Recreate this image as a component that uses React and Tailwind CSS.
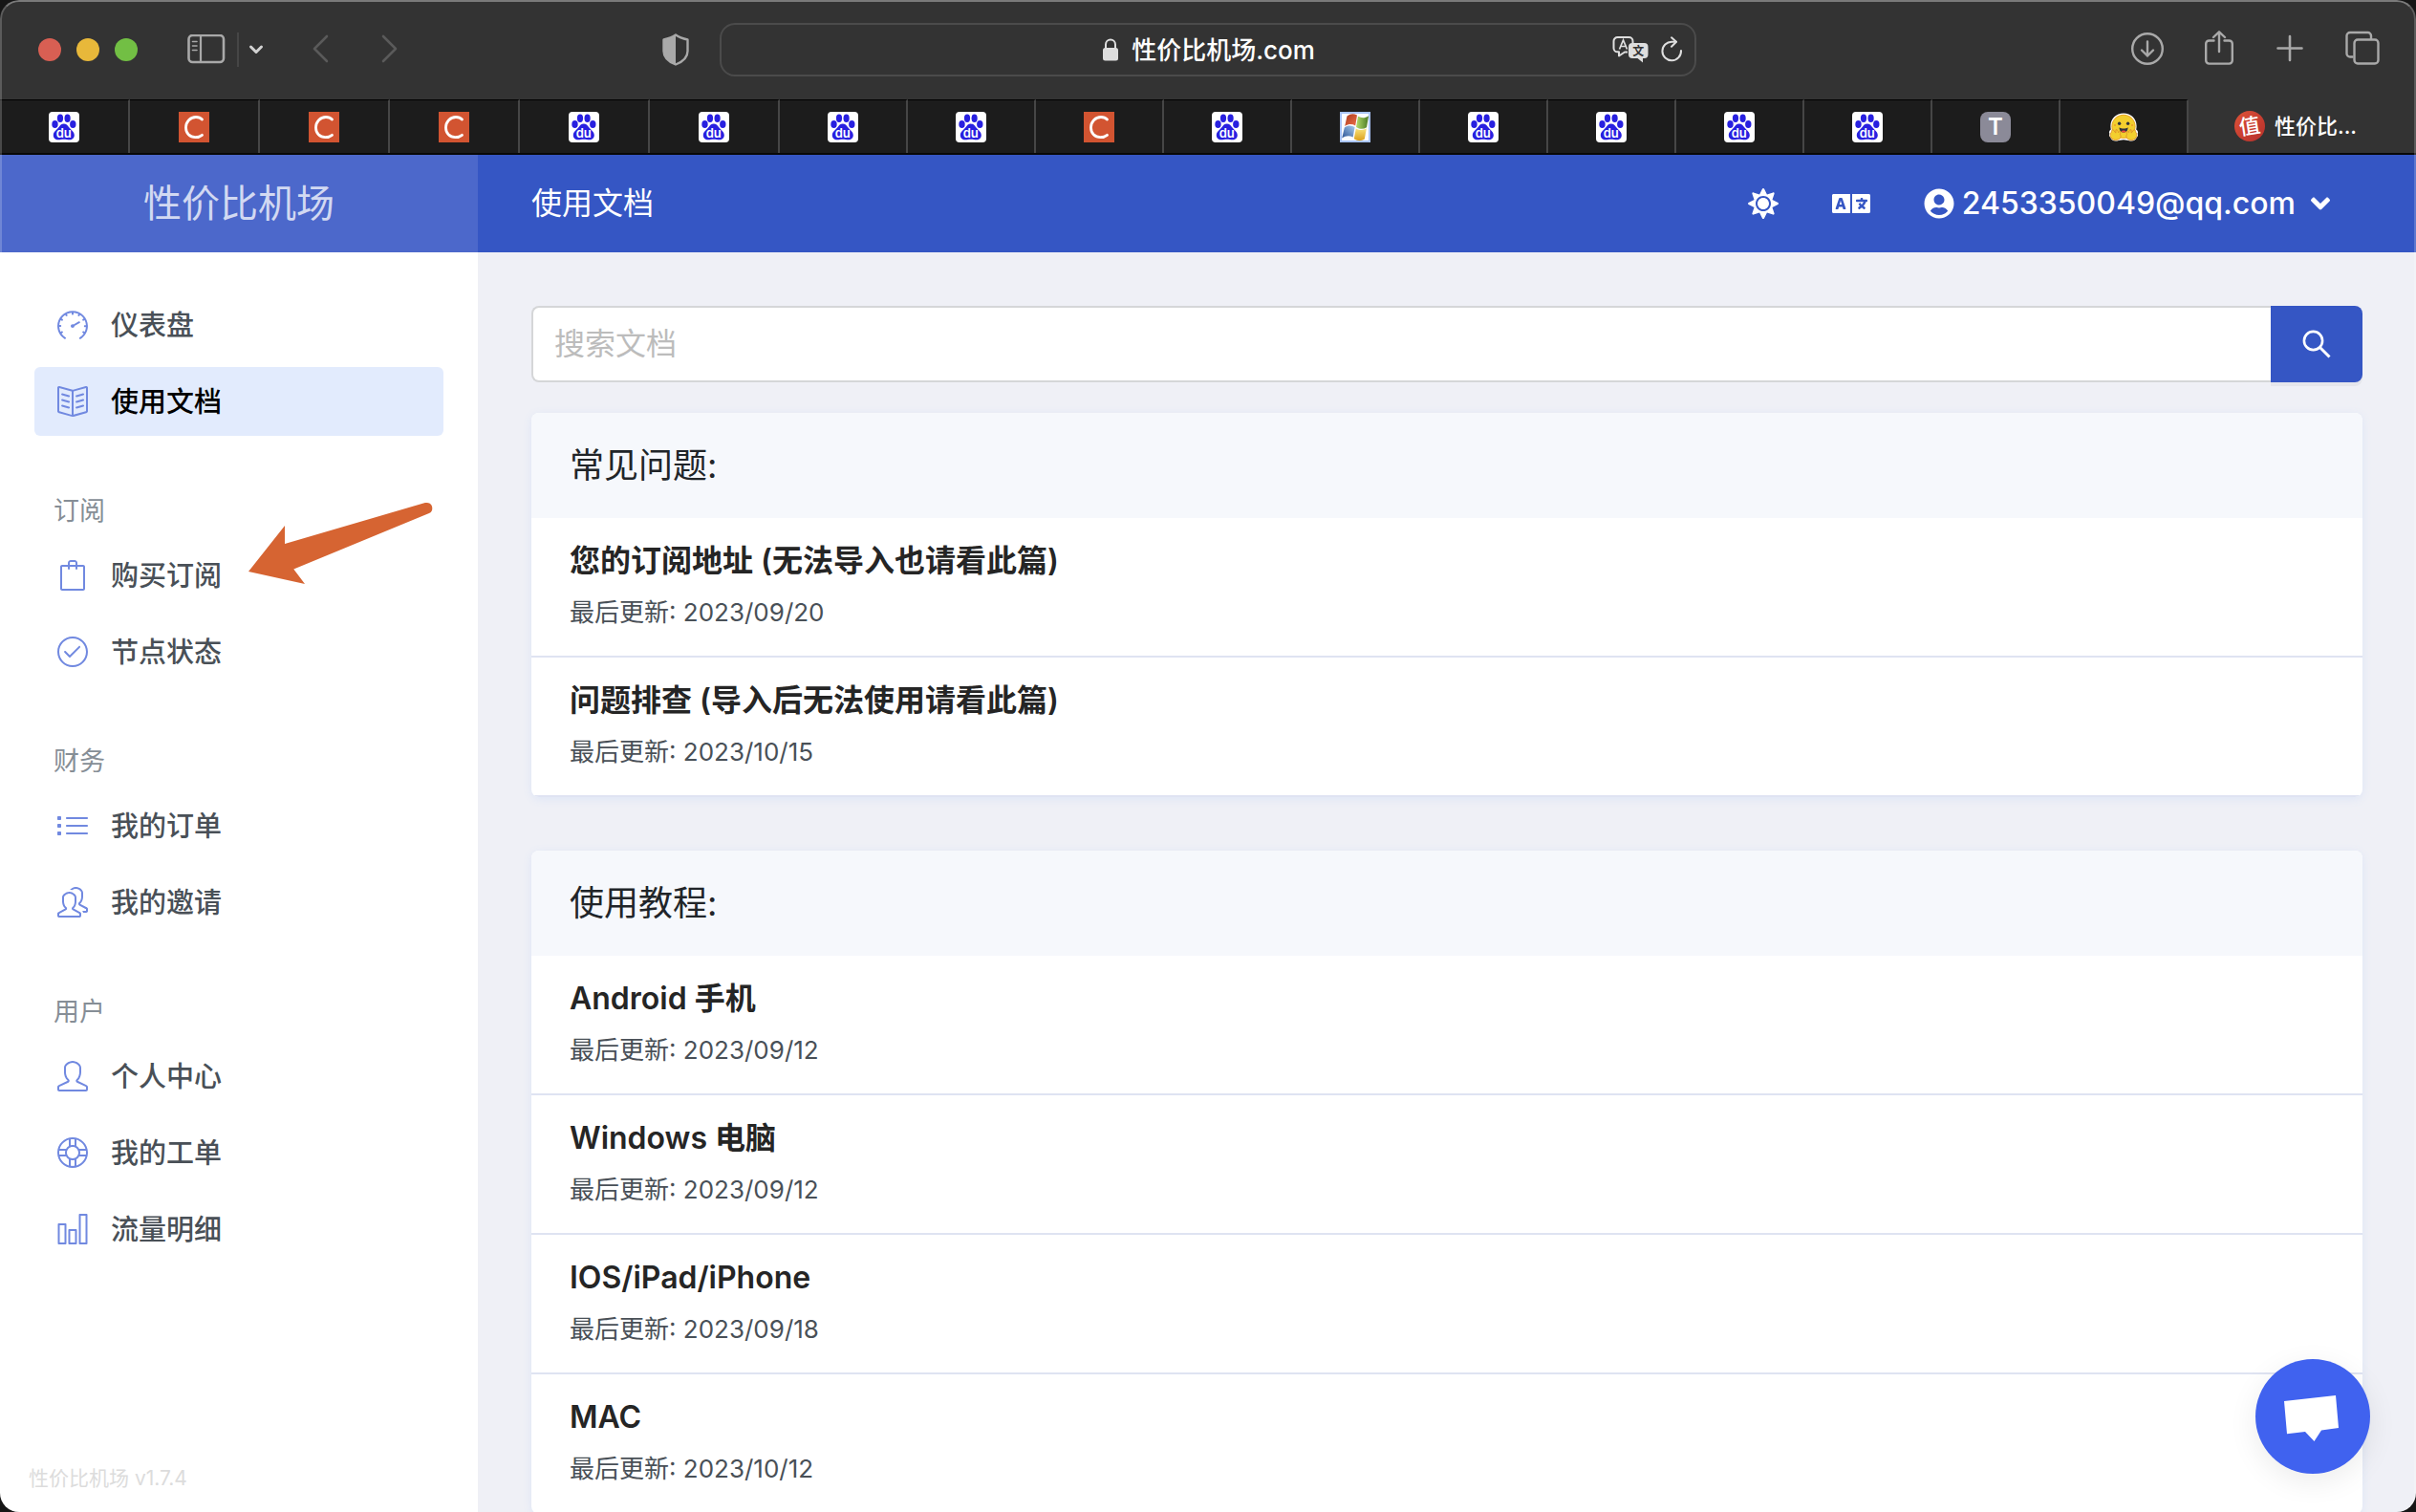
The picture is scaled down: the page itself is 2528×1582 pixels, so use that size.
import React from "react";
import {
  SlSpeedometer,
  SlBookOpen,
  SlBag,
  SlCheck,
  SlList,
  SlPeople,
  SlUser,
  SlSupport,
  SlChart,
} from "react-icons/sl";
import { FaSun, FaLanguage, FaUserCircle, FaAngleDown } from "react-icons/fa";

/* ---------- favicons ---------- */

function BaiduIcon() {
  return (
    <svg viewBox="0 0 32 32" className="size-8" aria-hidden="true">
      <rect width="32" height="32" rx="4" fill="#fff" />
      <g fill="#2820e0">
        <ellipse cx="6.5" cy="13" rx="3.2" ry="4.1" />
        <ellipse cx="12" cy="6.7" rx="3.1" ry="4.2" />
        <ellipse cx="19.6" cy="6.7" rx="3.1" ry="4.2" />
        <ellipse cx="25.3" cy="13" rx="3.2" ry="4.1" />
        <path d="M15.8 12.6c2.600 0 4 1.700 5.200 3.500 1.600 2.300 5.800 4.600 5.800 8.300 0 2.900-2.200 4.900-5.200 4.900-2 0-3.500-.5-5.800-.5s-3.800.5-5.800.5c-3 0-5.200-2-5.200-4.900 0-3.700 4.200-6 5.800-8.300 1.200-1.800 2.600-3.500 5.200-3.500z" />
      </g>
      <text x="15.800" y="26.800" textAnchor="middle" fontFamily="Inter, sans-serif" fontSize="13" fontWeight="600" fill="#fff">
        du
      </text>
    </svg>
  );
}

function CsdnIcon() {
  return (
    <svg viewBox="0 0 32 32" className="size-8" aria-hidden="true">
      <rect width="32" height="32" fill="#d25431" />
      <path d="M24.500 8C22.800 6.200 20.300 5.500 18 5.500c-6 0-10.500 4.800-10.500 11 0 6 4 10.200 10 10.200 2.600 0 5-.8 7-2.400" fill="none" stroke="#fff" strokeWidth="2.800" strokeLinecap="round" />
    </svg>
  );
}

function FlagIcon() {
  return (
    <svg viewBox="0 0 32 32" className="size-8" aria-hidden="true">
      <defs>
        <linearGradient id="flagRed" x1="0" y1="0" x2="1" y2="1">
          <stop offset="0" stopColor="#a83a1c" />
          <stop offset="1" stopColor="#f0704a" />
        </linearGradient>
        <linearGradient id="flagGreen" x1="0" y1="0" x2="1" y2="0">
          <stop offset="0" stopColor="#b4dc6a" />
          <stop offset="1" stopColor="#4a7a26" />
        </linearGradient>
        <linearGradient id="flagBlue" x1="0" y1="1" x2="1" y2="0">
          <stop offset="0" stopColor="#2c5496" />
          <stop offset="1" stopColor="#a8ccee" />
        </linearGradient>
        <linearGradient id="flagYellow" x1="0" y1="0" x2="0" y2="1">
          <stop offset="0" stopColor="#f8e27a" />
          <stop offset="1" stopColor="#dca01c" />
        </linearGradient>
      </defs>
      <rect width="32" height="32" fill="#a9c4f8" />
      <rect x="2" y="2" width="28" height="28" fill="#fbfcff" />
      <path d="M7.500 4.500c4-3 7-2.800 10.500-1l-1.800 11c-3.500-2-7-2-11 .5z" fill="url(#flagRed)" />
      <path d="M19 4.800c4 2 7 2 11-.6l-2 12c-3.600 2.200-7.200 2-11-.3z" fill="url(#flagGreen)" />
      <path d="M4.800 16.400c4-2.500 7.200-2.400 10.800-.4l-1.900 10.600c-3.600-2-7.400-1.900-11.500.8z" fill="url(#flagBlue)" />
      <path d="M16.800 17.400c3.800 2.200 7.400 2.200 11 .2l-2 11c-3.800 2.200-7.200 2-11-.4z" fill="url(#flagYellow)" />
    </svg>
  );
}

function LetterTIcon() {
  return (
    <span className="flex size-8 items-center justify-center rounded-lg bg-[#8b8a98] text-2xl font-semibold text-white">
      T
    </span>
  );
}

function HugIcon() {
  return (
    <svg viewBox="0 0 32 32" className="size-8" aria-hidden="true">
      <path d="M16 1.600c7.800 0 13.600 5.800 13.600 13.200 0 1.400-.1 2.400-.4 3.600 2 1.300 2.200 3.300 1.500 4.600.8 1.600.2 3-1 3.800-.4 2.600-3.600 4.200-7 3.600-2.200-.4-4-1.200-6.700-1.200s-4.500.8-6.700 1.200c-3.400.6-6.600-1-7-3.600-1.200-.8-1.800-2.200-1-3.800-.7-1.300-.5-3.300 1.500-4.600-.3-1.200-.4-2.200-.4-3.600C2.400 7.400 8.200 1.600 16 1.600z" fill="#fff" />
      <circle cx="16" cy="15.300" r="12.600" fill="#e9a92a" />
      <circle cx="16" cy="15.300" r="11.600" fill="#f3cf2e" />
      <circle cx="11.600" cy="12.200" r="1.700" fill="#30343c" />
      <circle cx="20.600" cy="12.200" r="1.700" fill="#30343c" />
      <circle cx="7" cy="14" r="1" fill="#ee9a2a" />
      <circle cx="25" cy="14" r="1" fill="#ee9a2a" />
      <path d="M11.600 16.300c1.300 1 2.800 1.300 4.500 1.300s3.200-.3 4.400-1.300c.3 3.300-1.900 5.300-4.400 5.300s-4.800-2-4.500-5.300z" fill="#30343c" />
      <path d="M13.600 20.200c.8-.9 4.200-.9 5 0-.7 1-1.500 1.400-2.500 1.400s-1.900-.4-2.500-1.400z" fill="#ee4a3e" />
      <g fill="#f3cf2e" stroke="#e2952a" strokeWidth="1" strokeLinejoin="round">
        <path d="M5 18.500l2.800 3.600.2-3.400c1.800-.2 2.300 1.300 2.500 3l1.300-1.300c1.400.6 1 2 .6 3.200 1.600 2.200.3 4.800-2.200 5.500-3.300.8-6.500.2-7.200-2.400-1.200-.8-1.200-1.900-.4-2.700-.8-1.100-.4-2.200.8-2.400-.2-1.500.6-2.900 1.600-3.100z" />
        <path d="M27 18.500l-2.800 3.600-.2-3.400c-1.800-.2-2.300 1.300-2.500 3l-1.300-1.300c-1.400.6-1 2-.6 3.200-1.600 2.200-.3 4.800 2.200 5.500 3.300.8 6.500.2 7.200-2.400 1.200-.8 1.200-1.900.4-2.700.8-1.100.4-2.200-.8-2.400.2-1.500-.6-2.900-1.600-3.100z" />
      </g>
    </svg>
  );
}

function ZhiIcon() {
  return (
    <svg viewBox="0 0 32 32" className="size-8 shrink-0 overflow-visible" aria-hidden="true">
      <defs>
        <linearGradient id="zhiRed" x1="0" y1="0" x2="1" y2="1">
          <stop offset="0" stopColor="#dd5238" />
          <stop offset="1" stopColor="#b62f2b" />
        </linearGradient>
      </defs>
      <circle cx="16" cy="16" r="16" fill="url(#zhiRed)" />
      <text x="16" y="24" textAnchor="middle" transform="rotate(-9 16 16)" fontFamily="'Noto Sans CJK SC', sans-serif" fontSize="22" fontWeight="500" fill="#fff">
        值
      </text>
    </svg>
  );
}

/* ---------- browser toolbar ---------- */

function BrowserToolbar() {
  return (
    <div className="grid h-[104px] grid-cols-[753fr_1022fr_753fr] items-center bg-[#333333]">
      <div className="flex items-center pr-8 pl-10">
        <div className="flex gap-4">
          <button aria-label="关闭" className="size-6 rounded-full bg-[#d85f53]" />
          <button aria-label="最小化" className="size-6 rounded-full bg-[#e8b83a]" />
          <button aria-label="全屏" className="size-6 rounded-full bg-[#72bf44]" />
        </div>
        <button aria-label="边栏" className="ml-[52px]">
          <svg viewBox="0 0 40 32" className="h-8 w-10" fill="none" stroke="#a9a9a9" strokeLinecap="round" aria-hidden="true">
            <rect x="1.500" y="1" width="36.500" height="28" rx="4" strokeWidth="2.600" />
            <path d="M14 1v28" strokeWidth="2.200" />
            <path d="M5.500 7.500h4.500M5.500 12h4.500M5.500 16.500h4.500" strokeWidth="1.600" />
          </svg>
        </button>
        <span className="ml-3 h-9 w-0.5 bg-[#464646]" />
        <button aria-label="标签页组" className="ml-2">
          <svg viewBox="0 0 20 20" className="size-5" fill="none" stroke="#d2d2d2" strokeWidth="3" strokeLinecap="round" strokeLinejoin="round" aria-hidden="true">
            <path d="M4.500 7l5.500 5.500L15.500 7" />
          </svg>
        </button>
        <button aria-label="后退" className="ml-12">
          <svg viewBox="0 0 20 32" className="h-8 w-5" fill="none" stroke="#5a5a5a" strokeWidth="2.600" strokeLinecap="round" strokeLinejoin="round" aria-hidden="true">
            <path d="M16 2L3 15l13 13" />
          </svg>
        </button>
        <button aria-label="前进" className="ml-[52px]">
          <svg viewBox="0 0 20 32" className="h-8 w-5" fill="none" stroke="#5a5a5a" strokeWidth="2.600" strokeLinecap="round" strokeLinejoin="round" aria-hidden="true">
            <path d="M3 2l13 13L3 28" />
          </svg>
        </button>
        <button aria-label="隐私报告" className="ml-auto">
          <svg viewBox="0 0 28 34" className="h-[34px] w-7" aria-hidden="true">
            <path d="M14 1.500C10.500 4 6 5.500 1.500 6.500v12c0 7 6 11.500 12.500 14 6.500-2.500 12.500-7 12.500-14v-12C22 5.500 17.500 4 14 1.500z" fill="none" stroke="#a9a9a9" strokeWidth="2.400" strokeLinejoin="round" />
            <path d="M14 1.500C10.500 4 6 5.500 1.500 6.500v12c0 7 6 11.500 12.500 14z" fill="#a9a9a9" />
          </svg>
        </button>
      </div>

      <div className="flex h-14 items-center rounded-2xl border-2 border-[#4b4b4b] px-3">
        <div className="flex-1" />
        <a href="#" className="flex items-center gap-3 text-[26px] font-medium text-white">
          <svg viewBox="0 0 20 26" className="h-[26px] w-5" aria-hidden="true">
            <rect x="2" y="11" width="16" height="13.500" rx="2.500" fill="#dedede" />
            <path d="M5 12V7.500a5 5 0 0 1 10 0V12" fill="none" stroke="#dedede" strokeWidth="2" />
          </svg>
          性价比机场.com
        </a>
        <div className="flex flex-1 items-center justify-end gap-3">
          <button aria-label="翻译">
            <svg viewBox="0 0 38 28" className="h-7 w-[38px]" aria-hidden="true">
              <path d="M16 16.500h-3L7 20.500v-4.200H5.500A4 4 0 0 1 1.500 12.500V5a4 4 0 0 1 4-4h12a4 4 0 0 1 4 4v2" fill="none" stroke="#dedede" strokeWidth="2" strokeLinejoin="round" />
              <path d="M7.500 13.500l4-9.500 4 9.500M9 10.500h5" fill="none" stroke="#dedede" strokeWidth="1.700" />
              <path d="M21 7h12.500a4 4 0 0 1 4 4v8a4 4 0 0 1-4 4H32v4.500L26.500 23H21a4 4 0 0 1-4-4v-8a4 4 0 0 1 4-4z" fill="#dedede" />
              <text x="27.200" y="19.500" textAnchor="middle" fontFamily="'Noto Sans CJK SC', sans-serif" fontSize="12" fontWeight="700" fill="#333">
                文
              </text>
            </svg>
          </button>
          <button aria-label="重新载入">
            <svg viewBox="0 0 24 28" className="h-7 w-6" fill="none" stroke="#dedede" strokeWidth="2" strokeLinecap="round" strokeLinejoin="round" aria-hidden="true">
              <path d="M22 15a9.800 9.800 0 1 1-9.600-9.300h4.300" />
              <path d="M12 1.300l5 4.500-5 5" />
            </svg>
          </button>
        </div>
      </div>

      <div className="flex items-center justify-end gap-[42px] pr-[38px]">
        <button aria-label="下载">
          <svg viewBox="0 0 36 40" className="h-10 w-9" fill="none" stroke="#a9a9a9" strokeWidth="2.400" strokeLinecap="round" strokeLinejoin="round" aria-hidden="true">
            <circle cx="19" cy="19" r="15.800" />
            <path d="M19 11.500v15M13 20.500l6 6 6-6" />
          </svg>
        </button>
        <button aria-label="共享">
          <svg viewBox="0 0 32 40" className="h-10 w-8" fill="none" stroke="#a9a9a9" strokeWidth="2.400" strokeLinecap="round" strokeLinejoin="round" aria-hidden="true">
            <path d="M10.500 10.500H5.500a3.300 3.300 0 0 0-3.300 3.300v17.500a3.300 3.300 0 0 0 3.300 3.300h21a3.300 3.300 0 0 0 3.300-3.300V13.800a3.300 3.300 0 0 0-3.300-3.300h-5" />
            <path d="M16 22V1.500M10 7l6-5.700L22 7" />
          </svg>
        </button>
        <button aria-label="新标签页">
          <svg viewBox="0 0 32 40" className="h-10 w-8" fill="none" stroke="#a9a9a9" strokeWidth="2.600" strokeLinecap="round" aria-hidden="true">
            <path d="M16 6v25M3.500 18.500h25" />
          </svg>
        </button>
        <button aria-label="标签页概览">
          <svg viewBox="0 0 36 40" className="h-10 w-9" fill="none" stroke="#a9a9a9" strokeWidth="2.400" strokeLinejoin="round" aria-hidden="true">
            <path d="M8.500 27.500H5A3.500 3.500 0 0 1 1.500 24V5.500A3.500 3.500 0 0 1 5 2h18.500A3.500 3.500 0 0 1 27 5.500V9.500" />
            <rect x="9.500" y="9.500" width="25" height="25" rx="3.500" />
          </svg>
        </button>
      </div>
    </div>
  );
}

/* ---------- tab strip ---------- */

const TABS = [
  BaiduIcon, CsdnIcon, CsdnIcon, CsdnIcon, BaiduIcon, BaiduIcon, BaiduIcon, BaiduIcon, CsdnIcon,
  BaiduIcon, FlagIcon, BaiduIcon, BaiduIcon, BaiduIcon, BaiduIcon, LetterTIcon, HugIcon,
];

function TabStrip() {
  return (
    <div className="flex h-[58px] border-b-2 border-[#080808]">
      {TABS.map((Icon, i) => (
        <button
          key={i}
          aria-label={`标签页 ${i + 1}`}
          className={
            "flex items-center justify-center border-t border-r-2 border-t-black border-r-[#464646] bg-[#1c1c1c] " +
            (i < 6 ? "w-[136px]" : "flex-1")
          }
        >
          <Icon />
        </button>
      ))}
      <button className="flex w-[238px] items-center gap-2.5 bg-[#333333] pl-12 text-[22px] font-medium text-white">
        <ZhiIcon />
        <span>性价比...</span>
      </button>
    </div>
  );
}

/* ---------- sidebar ---------- */

const NAV = [
  {
    items: [
      { label: "仪表盘", Icon: SlSpeedometer },
      { label: "使用文档", Icon: SlBookOpen, active: true },
    ],
  },
  {
    title: "订阅",
    items: [
      { label: "购买订阅", Icon: SlBag, pointed: true },
      { label: "节点状态", Icon: SlCheck },
    ],
  },
  {
    title: "财务",
    items: [
      { label: "我的订单", Icon: SlList },
      { label: "我的邀请", Icon: SlPeople },
    ],
  },
  {
    title: "用户",
    items: [
      { label: "个人中心", Icon: SlUser },
      { label: "我的工单", Icon: SlSupport },
      { label: "流量明细", Icon: SlChart },
    ],
  },
];

function PointerArrow() {
  return (
    <svg viewBox="0 0 194 86" className="pointer-events-none absolute -top-10 left-56 h-[86px] w-[194px]" aria-hidden="true">
      <path d="M0 72L38 24v19L184 .3c5-1.300 8.500 1.500 8.300 5.700 0 2.500-1 4-3.300 5L47.300 69.400 59 85z" fill="#d66432" />
    </svg>
  );
}

function Sidebar() {
  return (
    <aside className="flex w-[500px] shrink-0 flex-col bg-white pt-10">
      <nav>
        {NAV.map((group, i) => (
          <section key={i}>
            {group.title && (
              <h2 className="mt-14 mb-2 pl-14 text-[27px] leading-[46px] text-[#868e96]">{group.title}</h2>
            )}
            <ul className="flex flex-col gap-2 px-9">
              {group.items.map(({ label, Icon, active, pointed }) => (
                <li key={label} className="relative">
                  <a
                    href="#"
                    className={
                      "flex h-[72px] items-center gap-6 rounded-md px-6 text-[29px] font-medium " +
                      (active ? "bg-[#e2ebfd] text-black" : "text-[#495057]")
                    }
                  >
                    <Icon className="size-8 text-[#7189e0]" />
                    <span className="pt-0.5">{label}</span>
                  </a>
                  {pointed && <PointerArrow />}
                </li>
              ))}
            </ul>
          </section>
        ))}
      </nav>
      <p className="mt-auto pb-5 pl-[30px] text-[21px] leading-[30px] text-[#dcdcdc]">性价比机场 v1.7.4</p>
    </aside>
  );
}

/* ---------- documents ---------- */

const GROUPS = [
  {
    title: "常见问题:",
    docs: [
      ["您的订阅地址 (无法导入也请看此篇)", "2023/09/20"],
      ["问题排查 (导入后无法使用请看此篇)", "2023/10/15"],
    ],
  },
  {
    title: "使用教程:",
    docs: [
      ["Android 手机", "2023/09/12"],
      ["Windows 电脑", "2023/09/12"],
      ["IOS/iPad/iPhone", "2023/09/18"],
      ["MAC", "2023/10/12"],
    ],
  },
];

function DocGroup({ title, docs }) {
  return (
    <section className="shrink-0 overflow-hidden rounded-lg bg-white shadow-[0_2px_10px_#dde5f6]">
      <h2 className="flex h-[110px] items-center bg-[#f6f8fc] px-10 text-[36px] text-[#212529]">{title}</h2>
      <ul>
        {docs.map(([name, date]) => (
          <li key={name} className="border-b-2 border-[#dfe3f2]">
            <a href="#" className="flex h-36 flex-col justify-center px-10">
              <span className="text-[32px] leading-[54px] font-semibold text-[#252525]">{name}</span>
              <span className="text-[26px] leading-[54px] text-[#495057]">最后更新: {date}</span>
            </a>
          </li>
        ))}
      </ul>
    </section>
  );
}

function Main() {
  return (
    <main className="flex min-w-0 flex-1 flex-col overflow-hidden bg-[#eff0f6] p-14">
      <form className="mb-8 flex h-20 shrink-0" role="search" onSubmit={(e) => e.preventDefault()}>
        <input
          type="search"
          aria-label="搜索文档"
          placeholder="搜索文档"
          className="min-w-0 flex-1 rounded-l-lg border-2 border-r-0 border-[#d5d6d8] bg-white px-[22px] text-[32px] text-[#222222] placeholder:text-[#bcbcbc]"
        />
        <button aria-label="搜索" className="flex w-24 items-center justify-center rounded-r-lg bg-[#3556c4] shadow-[0_4px_0_rgba(0,0,0,0.04)]">
          <svg viewBox="0 0 32 32" className="size-8" fill="none" stroke="#fff" strokeWidth="2.600" aria-hidden="true">
            <circle cx="12.500" cy="12.500" r="9.600" />
            <path d="M19.500 19.500l10 10" strokeWidth="3" />
          </svg>
        </button>
      </form>
      <div className="flex flex-col gap-14">
        {GROUPS.map((g) => (
          <DocGroup key={g.title} {...g} />
        ))}
      </div>
    </main>
  );
}

function SiteHeader() {
  return (
    <header className="flex h-[102px] shrink-0 bg-[#3556c4] text-white">
      <a href="#" className="flex w-[500px] shrink-0 items-center justify-center bg-[#4c68cb] text-[40px] text-white/75">
        性价比机场
      </a>
      <div className="flex flex-1 items-center pr-[90px] pl-14">
        <h1 className="text-[32px]">使用文档</h1>
        <div className="ml-auto flex items-center gap-14">
          <button aria-label="主题">
            <FaSun className="size-8" />
          </button>
          <button aria-label="语言">
            <FaLanguage className="h-8 w-10" />
          </button>
          <button className="flex items-center gap-2 text-[32px] font-medium">
            <FaUserCircle className="size-8" />
            2453350049@qq.com
            <FaAngleDown className="ml-2 h-8 w-5" />
          </button>
        </div>
      </div>
    </header>
  );
}

export default function App() {
  return (
    <div className="h-screen bg-[#161616] font-[Inter,'Noto_Sans_CJK_SC',sans-serif]">
      <div className="relative flex h-full flex-col overflow-hidden rounded-[20px]">
        <BrowserToolbar />
        <TabStrip />
        <SiteHeader />
        <div className="flex min-h-0 flex-1">
          <Sidebar />
          <Main />
        </div>
        <button aria-label="在线客服" className="absolute right-12 bottom-10 size-[120px] rounded-full bg-[#4062ef] shadow-[0_8px_30px_rgba(0,0,0,0.08)]">
          <svg viewBox="0 0 120 120" className="size-full" aria-hidden="true">
            <path d="M30 44l54-6 3 34-18 2.500L61.500 86 52 76l-19 2.300z" fill="#fff" />
          </svg>
        </button>
        <div className="pointer-events-none absolute inset-0 rounded-[20px] border-2 border-b-0 border-white/20 border-t-white/35" />
      </div>
    </div>
  );
}
